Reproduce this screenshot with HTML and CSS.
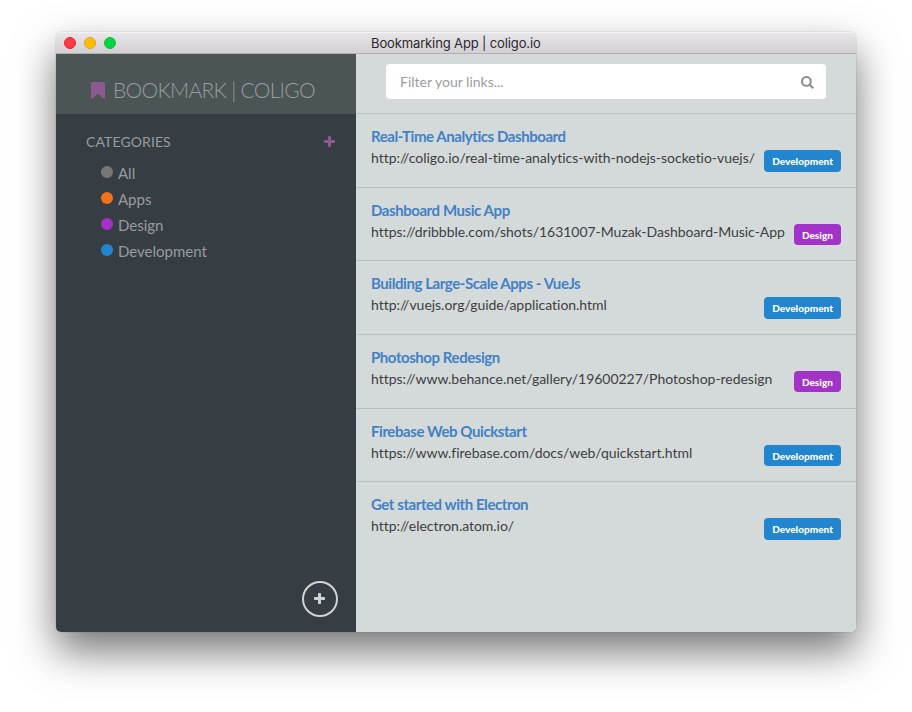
FILE: index.html
```html
<!DOCTYPE html>
<html lang="en">
<head>
<meta charset="utf-8">
<title>Bookmarking App | coligo.io</title>
<link rel="stylesheet" href="styles.css">
</head>
<body>
<div class="window">
  <header class="titlebar">
    <div class="lights"><i class="light close"></i><i class="light minimize"></i><i class="light maximize"></i></div>
    <span class="window-title">Bookmarking App | coligo.io</span>
  </header>
  <div class="app">
    <aside class="sidebar">
      <div class="brand">
        <svg class="brand-icon" viewBox="0 0 14 17"><path d="M1.3 0h11.4Q14 0 14 1.3v14.2q0 1.5-1.5 1.2L7 11.8l-5.500 4.900Q0 17 0 15.500V1.300Q0 0 1.300 0z"/></svg>
        <span class="brand-name">BOOKMARK | COLIGO</span>
      </div>
      <div class="cat-head">
        <span class="cat-title">CATEGORIES</span>
        <svg class="plus" viewBox="0 0 11 11"><path d="M4.800 0h1.400q.8 0 .8.8V4h3.200q.8 0 .8.800v1.400q0 .8-.8.8H7v3.200q0 .8-.8.8H4.800q-.8 0-.8-.8V7H.8Q0 7 0 6.200V4.800Q0 4 .8 4H4V.8Q4 0 4.800 0z"/></svg>
      </div>
      <ul class="cats">
        <li><i class="dot grey"></i><span>All</span></li>
        <li><i class="dot orange"></i><span>Apps</span></li>
        <li><i class="dot purple"></i><span>Design</span></li>
        <li><i class="dot blue"></i><span>Development</span></li>
      </ul>
      <button class="add" aria-label="Add bookmark">
        <svg class="plus" viewBox="0 0 11 11"><path d="M4.800 0h1.400q.8 0 .8.8V4h3.200q.8 0 .8.800v1.400q0 .8-.8.8H7v3.200q0 .8-.8.8H4.800q-.8 0-.8-.8V7H.8Q0 7 0 6.200V4.800Q0 4 .8 4H4V.8Q4 0 4.800 0z"/></svg>
      </button>
    </aside>
    <main class="main">
      <div class="filter">
        <div class="field">
          <span>Filter your links...</span>
          <svg class="search" viewBox="0 0 13 13"><circle cx="5.400" cy="5.400" r="4.400"/><path d="M8.700 8.700l3.600 3.600"/></svg>
        </div>
      </div>
      <div class="list">
        <article class="item"><div class="text"><h2>Real-Time Analytics Dashboard</h2><p>http://coligo.io/real-time-analytics-with-nodejs-socketio-vuejs/</p></div><span class="label blue">Development</span></article>
        <article class="item"><div class="text"><h2>Dashboard Music App</h2><p>https://dribbble.com/shots/1631007-Muzak-Dashboard-Music-App</p></div><span class="label purple">Design</span></article>
        <article class="item"><div class="text"><h2>Building Large-Scale Apps - VueJs</h2><p>http://vuejs.org/guide/application.html</p></div><span class="label blue">Development</span></article>
        <article class="item"><div class="text"><h2>Photoshop Redesign</h2><p>https://www.behance.net/gallery/19600227/Photoshop-redesign</p></div><span class="label purple">Design</span></article>
        <article class="item"><div class="text"><h2>Firebase Web Quickstart</h2><p>https://www.firebase.com/docs/web/quickstart.html</p></div><span class="label blue">Development</span></article>
        <article class="item"><div class="text"><h2>Get started with Electron</h2><p>http://electron.atom.io/</p></div><span class="label blue">Development</span></article>
      </div>
    </main>
  </div>
</div>
</body>
</html>
```
FILE: styles.css
```css
* { box-sizing: border-box; }
body { margin: 0; padding: 32px 56px 80px; height: 712px; overflow: hidden; background: #fff; font-family: Lato, sans-serif; }
h2, p, ul { margin: 0; padding: 0; }
.window { width: 800px; height: 600px; display: flex; flex-direction: column; border-radius: 5px; box-shadow: 0 0 1px rgba(0,0,0,.55), 0 19px 42px rgba(0,0,0,.55); }
.titlebar { height: 22px; flex: none; display: grid; grid-template-columns: 300px 1fr; align-items: center; border-radius: 5px 5px 0 0; border-bottom: 1px solid #b5aeb3; background: linear-gradient(#e9e7e9, #d3d0d3); box-shadow: inset 0 1px #f4f3f4; }
.lights { display: flex; gap: 8px; padding-left: 8px; }
.light { width: 12px; height: 12px; border-radius: 50%; border: 1px solid; }
.close { background: #ff3b47; border-color: #f01d31; }
.minimize { background: #ffbd00; border-color: #e5a21a; }
.maximize { background: #00d742; border-color: #17bd3b; }
.window-title { padding: 1px 0 0 15px; font: 13px/20px Inter, sans-serif; letter-spacing: -.13px; color: #2b282d; }
.app { flex: 1; display: flex; min-height: 0; }
.sidebar { width: 300px; display: flex; flex-direction: column; background: #363e44; border-radius: 0 0 0 5px; color: #999c9d; }
.brand { height: 60px; flex: none; display: flex; align-items: center; padding: 12px 0 0 34.500px; background: #4b5556; color: #989c9d; }
.brand-icon { width: 14px; height: 17px; margin: 1px 8.500px 0 0; fill: #8c5a91; }
.brand-name { font-size: 21px; line-height: 24px; font-weight: 300; letter-spacing: -.7px; white-space: nowrap; }
.cat-head { display: flex; justify-content: space-between; align-items: center; height: 20px; margin: 17px 21px 0 30px; }
.cat-title { font-size: 14px; letter-spacing: .1px; }
.plus { width: 11px; height: 11px; fill: #8c5a91; display: block; }
.cats { list-style: none; margin: 8px 0 0 45px; }
.cats li { height: 26px; display: flex; align-items: center; font-size: 15px; }
.cats span { padding-top: 1px; }
.dot { width: 12px; height: 12px; border-radius: 50%; margin: 0 5px 0 0; }
.dot.grey { background: #767676; }
.dot.orange { background: #f2711c; }
.purple { background: #a333c8; }
.blue { background: #2185d0; }
.add { width: 36px; height: 36px; margin: auto 18px 15px auto; padding: 0 1px 1px 0; display: flex; align-items: center; justify-content: center; border: 2px solid #d0d3d3; border-radius: 50%; background: none; }
.add .plus { fill: #d0d3d3; }
.main { flex: 1; min-width: 0; background: #d4dada; border-radius: 0 0 5px 0; }
.filter { height: 60px; padding: 10px 30px 0; border-bottom: 1px solid #bcc3c3; }
.field { height: 35px; display: flex; justify-content: space-between; align-items: center; padding: 0 12px 0 14px; border-radius: 4px; background: #fff; color: #9c9c9c; font-size: 14px; }
.search { width: 13px; height: 13px; margin-top: 2px; fill: none; stroke: #8b8b8b; stroke-width: 2; }
.item { height: 73.65px; display: flex; justify-content: space-between; align-items: flex-start; padding: 11px 15px 0; border-bottom: 1px solid #b9bfc0; }
.item:last-child { border-bottom: 0; }
.item h2 { font-size: 15px; line-height: 22px; font-weight: 700; letter-spacing: -.43px; color: #4281c6; white-space: nowrap; }
.item p { font-size: 14px; line-height: 21px; letter-spacing: -.03px; color: #3d4041; white-space: nowrap; }
.label { height: 21.5px; margin-top: 25px; padding: 0 8px; border-radius: 4px; color: #fff; font-size: 10px; line-height: 22px; font-weight: 900; letter-spacing: .03px; }
```
